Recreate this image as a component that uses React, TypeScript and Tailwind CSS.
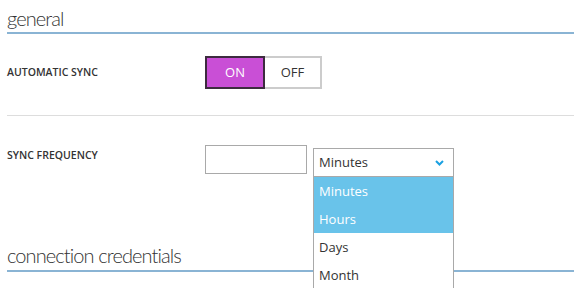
import React from "react";

const options = ["Minutes", "Hours", "Days", "Month"];
const highlighted = ["Minutes", "Hours"];

const Toggle: React.FC = () => (
  <div className="flex h-[33px] w-[117px] text-[13px]">
    <div className="flex w-[60px] items-center justify-center border-2 border-[#3d2b3f] bg-[#c94fd6] text-white">
      ON
    </div>
    <div className="flex flex-1 items-center justify-center border-2 border-l-0 border-[#cccccc] bg-white text-[#333]">
      OFF
    </div>
  </div>
);

const FrequencySelect: React.FC = () => (
  <div className="relative mt-[3px] w-[141px]">
    <div className="flex h-[29px] items-center justify-between border border-[#a9a9a9] bg-white pl-[5px] pr-[9px] text-[13px] text-[#333]">
      <span>Minutes</span>
      <svg width="9" height="6" viewBox="0 0 9 6" fill="none">
        <path d="M1 1l3.5 3.5L8 1" stroke="#1ba1e2" strokeWidth="2" />
      </svg>
    </div>
    <ul className="absolute left-0 top-[29px] z-10 w-full border border-t-0 border-[#a9a9a9] bg-white text-[13px]">
      {options.map((o) => (
        <li
          key={o}
          className={
            highlighted.includes(o)
              ? "flex h-[28px] items-center bg-[#69c3ea] pl-[5px] pt-[2px] text-white"
              : "flex h-[28px] items-center pl-[5px] pt-[2px] text-[#333]"
          }
        >
          {o}
        </li>
      ))}
    </ul>
  </div>
);

const headingFont = { fontFamily: 'Lato, "Open Sans", sans-serif' };

export default function App() {
  return (
    <div
      className="h-[288px] w-[574px] overflow-hidden bg-white pl-[7px]"
      style={{ fontFamily: '"Open Sans", "Noto Sans", sans-serif' }}
    >
      <h2
        className="h-[34px] border-b-2 border-[#8ab4d4] pt-[5px] text-[20px] font-light leading-[26px] tracking-[-0.9px] text-[#333]"
        style={headingFont}
      >
        general
      </h2>

      <div className="mt-[22px] flex items-center">
        <div className="w-[198px] text-[10.5px] font-semibold text-[#333]">AUTOMATIC SYNC</div>
        <Toggle />
      </div>

      <div className="mt-[26px] h-px bg-[#dddddd]" />

      <div className="mt-[29px] flex h-[83px] items-start">
        <div className="w-[198px] pt-[3px] text-[10.5px] font-semibold text-[#333]">SYNC FREQUENCY</div>
        <input
          className="h-[29px] w-[102px] border border-[#a9a9a9] bg-white outline-none"
          type="text"
        />
        <div className="ml-[6px]">
          <FrequencySelect />
        </div>
      </div>

      <h2
        className="h-[44px] border-b-2 border-[#8ab4d4] pt-[14px] text-[20px] font-light leading-[26px] tracking-[-0.9px] text-[#333]"
        style={headingFont}
      >
        connection credentials
      </h2>
    </div>
  );
}
